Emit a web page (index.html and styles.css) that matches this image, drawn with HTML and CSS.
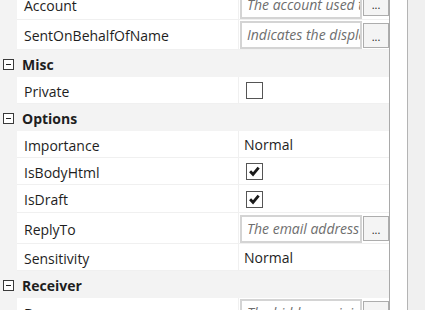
FILE: index.html
```html
<!DOCTYPE html>
<html lang="en">
<head>
    <meta charset="UTF-8">
    <meta name="viewport" content="width=device-width, initial-scale=1.0">
    <title>Properties</title>
    <link rel="stylesheet" href="styles.css">
</head>
<body>
    <div class="frame">
        <div class="grid">
            <div class="rows">
                <div class="row tall first">
                    <div class="name">Account</div>
                    <div class="value"><span class="field">The account used to send the email</span><span class="more">...</span></div>
                </div>
                <div class="row tall">
                    <div class="name">SentOnBehalfOfName</div>
                    <div class="value"><span class="field">Indicates the display name of the sender</span><span class="more">...</span></div>
                </div>
                <div class="cat"><span class="toggle"></span>Misc</div>
                <div class="row">
                    <div class="name">Private</div>
                    <div class="value"><span class="check"></span></div>
                </div>
                <div class="cat"><span class="toggle"></span>Options</div>
                <div class="row">
                    <div class="name">Importance</div>
                    <div class="value">Normal</div>
                </div>
                <div class="row">
                    <div class="name">IsBodyHtml</div>
                    <div class="value"><span class="check on"><svg viewBox="0 0 16 16"><path d="M3.3 7.8 L6.4 11 L12.4 3.8" /></svg></span></div>
                </div>
                <div class="row draft">
                    <div class="name">IsDraft</div>
                    <div class="value"><span class="check on"><svg viewBox="0 0 16 16"><path d="M3.3 7.8 L6.4 11 L12.4 3.8" /></svg></span></div>
                </div>
                <div class="row tall wide">
                    <div class="name">ReplyTo</div>
                    <div class="value"><span class="field">The email address to reply to</span><span class="more">...</span></div>
                </div>
                <div class="row">
                    <div class="name">Sensitivity</div>
                    <div class="value">Normal</div>
                </div>
                <div class="cat"><span class="toggle"></span>Receiver</div>
                <div class="row tall">
                    <div class="name">Bcc</div>
                    <div class="value"><span class="field">The hidden recipients</span><span class="more">...</span></div>
                </div>
            </div>
        </div>
        <div class="strip"></div>
        <div class="side"></div>
    </div>
</body>
</html>
```

FILE: styles.css
```css
* {
    margin: 0;
    padding: 0;
    box-sizing: border-box;
}

body {
    background: #f0f0f0;
    font-family: 'Open Sans', 'Noto Sans', sans-serif;
    font-size: 14px;
    color: #1e1e1e;
    overflow: hidden;
}

.frame {
    display: flex;
    height: 310px;
    width: 425px;
}

.grid {
    width: 390px;
    height: 310px;
    overflow: hidden;
    border-right: 1px solid #a9a9a9;
    background: #f3f3f3;
}

.rows {
    margin-top: -10px;
}

.strip {
    width: 18px;
    background: #fff;
    border-right: 1px solid #b4b4b4;
}

.side {
    flex: 1;
    background: #f0f0f0;
}

.row {
    display: grid;
    grid-template-columns: 222px 150px;
    margin-left: 17px;
    height: 27px;
    background: #fff;
    border-bottom: 1px solid #f0f0f0;
}

.row.draft {
    height: 28px;
}

.row.tall {
    height: 30px;
}

.row.wide {
    height: 31px;
}

.row.first .value {
    align-items: flex-start;
}

.name {
    padding-left: 7px;
    padding-top: 2px;
    display: flex;
    align-items: center;
    border-right: 1px solid #f0f0f0;
    white-space: nowrap;
}

.value {
    display: flex;
    align-items: center;
    padding-left: 5px;
    padding-top: 1px;
}

.cat {
    height: 27px;
    display: flex;
    align-items: center;
    font-weight: bold;
    background: #f3f3f3;
    padding-left: 3px;
    padding-top: 1px;
}

.toggle {
    width: 11px;
    height: 11px;
    border: 1px solid #3a3a3a;
    margin-right: 8px;
    position: relative;
    background: #fff;
}

.toggle::after {
    content: "";
    position: absolute;
    left: 2px;
    top: 4px;
    width: 5px;
    height: 1px;
    background: #222;
}

.check {
    width: 17px;
    height: 17px;
    border: 1px solid #555;
    margin-left: 2px;
    background: #fff;
}

.check svg {
    width: 15px;
    height: 15px;
    display: block;
}

.check path {
    fill: none;
    stroke: #1a1a1a;
    stroke-width: 3;
}

.value .field {
    width: 122px;
    height: 28px;
    margin-left: -4px;
    border: 2px solid #d4d4d4;
    background: #fff;
    font-style: italic;
    color: #6e6e6e;
    padding-left: 5px;
    line-height: 24px;
    white-space: nowrap;
    overflow: hidden;
}

.more {
    width: 26px;
    height: 25px;
    margin-left: 1px;
    border: 1px solid #adadad;
    background: #f4f4f4;
    font-size: 11px;
    text-align: center;
    line-height: 26px;
    color: #222;
}
```
